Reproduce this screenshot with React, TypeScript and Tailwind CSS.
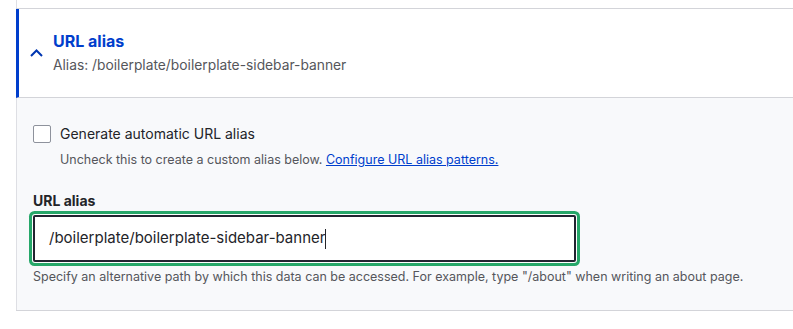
import React from "react";

export default function App() {
  return (
    <div
      className="w-[793px] h-[329px] bg-white overflow-hidden text-[#232429]"
      style={{ fontFamily: "Inter, 'Noto Sans', sans-serif" }}
    >
      <div className="h-2 ml-4 border-l border-[#dedfe4]" />
      <div className="ml-4 border-t border-b border-[#d3d4d9]">
        {/* Summary header */}
        <div className="flex items-center bg-white border-l-[3px] border-[#003ecc] pl-[11px] pt-[22px] pb-[23px] border-b border-b-[#d3d4d9]">
          <svg width="13" height="8" viewBox="0 0 13 8" className="shrink-0">
            <path d="M1 7 L6.5 1.5 L12 7" fill="none" stroke="#0036b1" strokeWidth="2" />
          </svg>
          <div className="ml-[10px]">
            <div className="text-[16px] leading-[20px] font-bold text-[#003ecc]">URL alias</div>
            <div className="mt-[5px] text-[13.8px] leading-[18px] text-[#55565b]">
              Alias: /boilerplate/boilerplate-sidebar-banner
            </div>
          </div>
        </div>
        {/* Body */}
        <div className="bg-[#f8f9fb] border-l border-[#dedfe4] pl-4 pt-[26px] pb-[25px]">
          <div className="flex items-center">
            <div className="w-[18px] h-[18px] rounded-[2px] border border-[#8e929c] bg-white shrink-0" />
            <div className="ml-[9px] text-[14px] leading-[20px] text-[#232429]">
              Generate automatic URL alias
            </div>
          </div>
          <div className="mt-2 ml-[27px] text-[12.5px] leading-[16px] text-[#55565b]">
            Uncheck this to create a custom alias below.{" "}
            <a href="#" className="text-[#003ecc] underline">
              Configure URL alias patterns.
            </a>
          </div>
          <div className="mt-6 text-[14px] leading-[18px] font-bold text-[#232429]">URL alias</div>
          <div className="mt-[5px] w-[543px] h-[47px] flex items-center border-2 border-[#222330] rounded-[2px] bg-white pl-[14px] shadow-[0_0_0_1px_#ffffff,0_0_0_4px_#26a769]">
            <span className="text-[15px] text-[#232429]">/boilerplate/boilerplate-sidebar-banner</span>
            <span className="inline-block w-px h-[20px] bg-[#232429]" />
          </div>
          <div className="mt-[7px] text-[12.5px] leading-[16px] text-[#55565b]">
            Specify an alternative path by which this data can be accessed. For example, type "/about" when writing an about page.
          </div>
        </div>
      </div>
    </div>
  );
}
